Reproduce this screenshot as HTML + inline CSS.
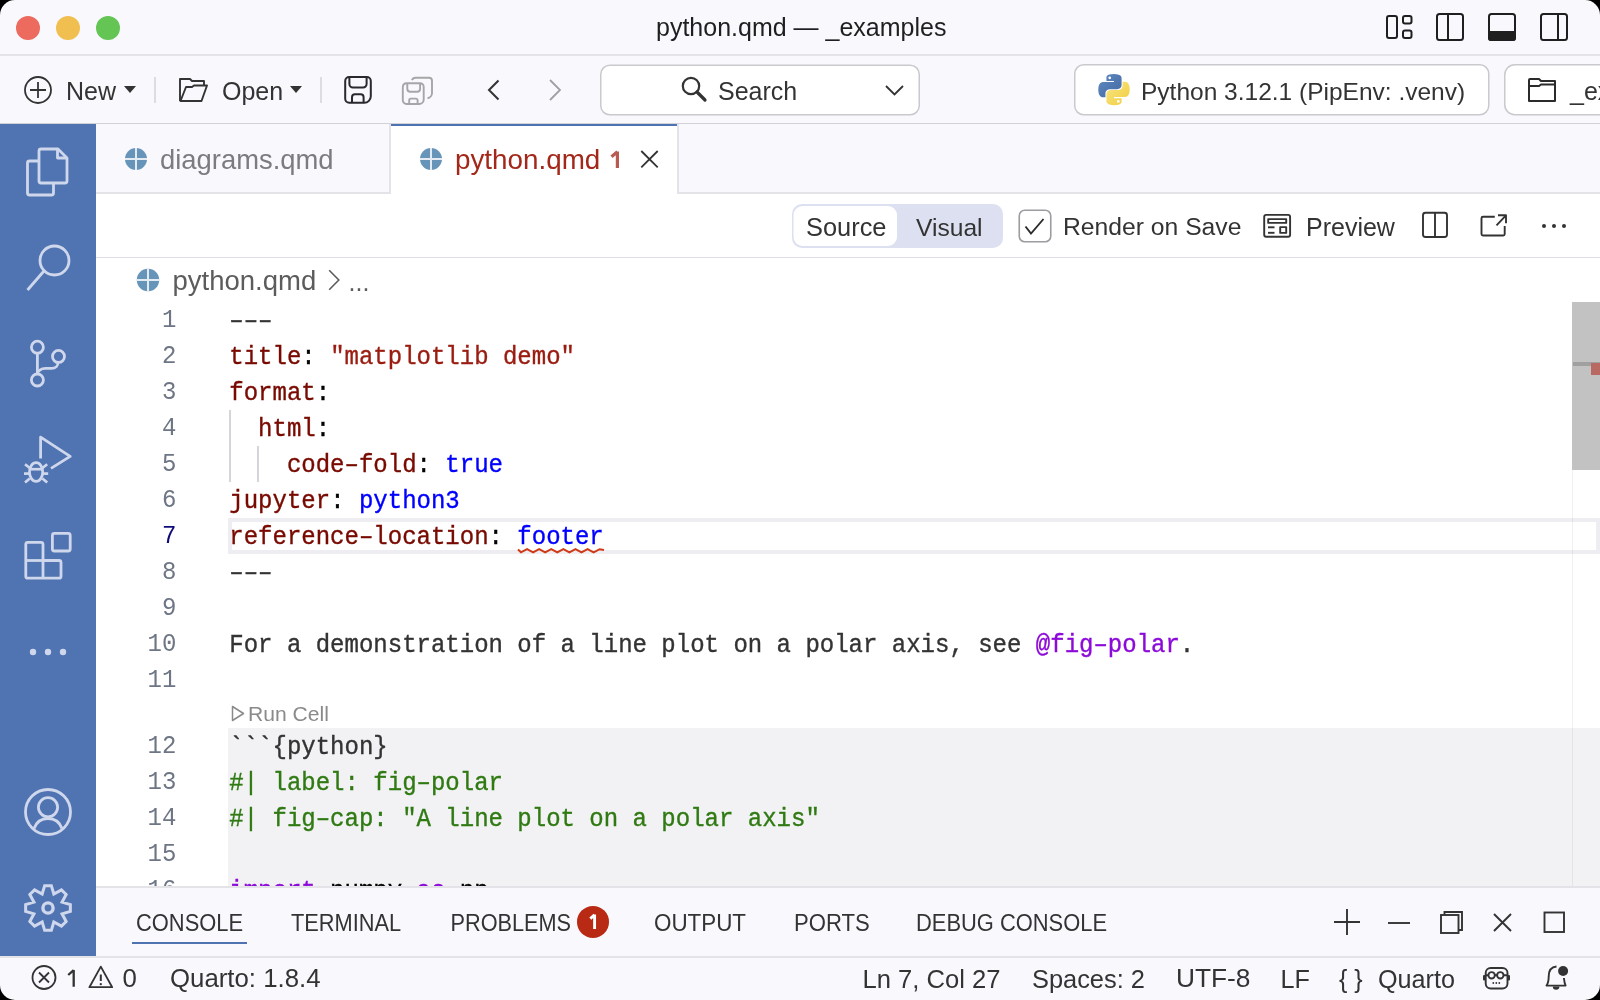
<!DOCTYPE html>
<html><head><meta charset="utf-8">
<style>
*{margin:0;padding:0;box-sizing:border-box}
html,body{width:1600px;height:1000px;overflow:hidden;background:#000}
body{font-family:"Liberation Sans",sans-serif;color:#333}
#win{will-change:transform;position:absolute;left:0;top:0;width:1600px;height:1000px;background:#f8f8fd;border-radius:15px;overflow:hidden}
.a{position:absolute;white-space:pre}
svg.s{position:absolute;overflow:visible;pointer-events:none}
</style></head><body>
<div id="win">
<svg class="s" width="1600" height="1000" style="left:0;top:0"><circle cx="28" cy="28" r="12" fill="#ec6a5e"/><circle cx="68" cy="28" r="12" fill="#f0bf4f"/><circle cx="108" cy="28" r="12" fill="#64c554"/></svg>
<div class="a" style="left:656px;top:11.14px;font-size:25px;line-height:32px;font-family:'Liberation Sans',sans-serif;color:#1f1f1f;">python.qmd — _examples</div>
<div class="a" style="left:0px;top:54px;width:1600px;height:2px;background:#e3e3e8;"></div>
<svg class="s" width="1600" height="1000" style="left:0;top:0"><g fill="none" stroke="#1f1f1f" stroke-width="2"><rect x="1387" y="16" width="10" height="22" rx="2"/><rect x="1403" y="16" width="8.5" height="7.5" rx="2"/><rect x="1403" y="30.5" width="8.5" height="7.5" rx="2"/><rect x="1437" y="14" width="26" height="26" rx="2.5"/><line x1="1448" y1="14" x2="1448" y2="40"/><rect x="1489" y="14" width="26" height="26" rx="2.5"/><rect x="1541" y="14" width="26" height="26" rx="2.5"/><line x1="1558" y1="14" x2="1558" y2="40"/></g><path d="M1488 31h28v7a3 3 0 0 1-3 3h-22a3 3 0 0 1-3-3z" fill="#1f1f1f"/></svg>
<div class="a" style="left:0px;top:123px;width:1600px;height:1px;background:#d2d2d8;"></div>
<svg class="s" width="1600" height="1000" style="left:0;top:0"><g fill="none" stroke="#333" stroke-width="1.8"><circle cx="38" cy="90" r="13"/><line x1="38" y1="82" x2="38" y2="98"/><line x1="30" y1="90" x2="46" y2="90"/></g><path d="M124 86h12l-6 7z" fill="#333"/><path d="M290 86h12l-6 7z" fill="#333"/></svg>
<div class="a" style="left:66px;top:74.94px;font-size:25px;line-height:32px;font-family:'Liberation Sans',sans-serif;color:#333;">New</div>
<div class="a" style="left:154px;top:77px;width:2px;height:26px;background:#dcdce2;"></div>
<div class="a" style="left:222px;top:74.94px;font-size:25px;line-height:32px;font-family:'Liberation Sans',sans-serif;color:#333;">Open</div>
<div class="a" style="left:320px;top:77px;width:2px;height:26px;background:#dcdce2;"></div>
<svg class="s" width="1600" height="1000" style="left:0;top:0"><g fill="none" stroke="#333" stroke-width="1.9" stroke-linejoin="round"><path d="M180 101V79h10l2 2h12v5"/><path d="M180.5 101l5.5-14h6l2-1.5h13l-5.5 15.5z"/></g></svg>
<svg class="s" width="1600" height="1000" style="left:0;top:0"><g fill="none" stroke="#2a2a2e" stroke-width="2" stroke-linejoin="round"><path d="M349.2 77h17.6a4 4 0 0 1 4 4v15.3a6.5 6.5 0 0 1-6.5 6.5h-15.1a4 4 0 0 1-4-4v-17.8a4 4 0 0 1 4-4z"/><path d="M349.4 77v7.1a3.5 3.5 0 0 0 3.5 3.5h10.2a3.5 3.5 0 0 0 3.5-3.5v-7.1"/><path d="M352 102.8v-5.6a3 3 0 0 1 3-3h5.6a3 3 0 0 1 3 3v5.6"/></g></svg>
<svg class="s" width="1600" height="1000" style="left:0;top:0"><g fill="none" stroke="#a6a6a9" stroke-width="1.9" stroke-linejoin="round"><path d="M412 80.2c0.6-1.6 2-2.5 3.5-2.5h13.5a3 3 0 0 1 3 3v12.5c0 2.3-2 4.6-4.5 5"/><path d="M406.5 83.2h13.5a3.7 3.7 0 0 1 3.7 3.7v12.6a4.5 4.5 0 0 1-4.5 4.5h-12.7a3.7 3.7 0 0 1-3.7-3.7v-13.4a3.7 3.7 0 0 1 3.7-3.7z"/><path d="M407.3 83.2v5.5a3 3 0 0 0 3 3h6.8a3 3 0 0 0 3-3v-5.5"/><path d="M409.2 104v-3.8a1.6 1.6 0 0 1 1.6-1.6h5.2a1.6 1.6 0 0 1 1.6 1.6v3.8"/></g></svg>
<svg class="s" width="1600" height="1000" style="left:0;top:0"><path d="M498.5 80.5l-9.5 9.5 9.5 9.5" fill="none" stroke="#333" stroke-width="2"/><path d="M550 80l10 10-10 10" fill="none" stroke="#a0a0a4" stroke-width="1.8"/></svg>
<svg class="s" width="1600" height="1000" style="left:0;top:0"><rect x="600.75" y="65.25" width="318.5" height="49.5" rx="9" fill="#fff" stroke="#c9c9ce" stroke-width="1.5"/><circle cx="691" cy="86" r="8.2" fill="none" stroke="#333" stroke-width="2.2"/><line x1="697" y1="92" x2="705" y2="100" stroke="#333" stroke-width="3.2" stroke-linecap="round"/><path d="M886 86l8.5 8.5 8.5-8.5" fill="none" stroke="#333" stroke-width="1.8"/></svg>
<div class="a" style="left:718px;top:74.94px;font-size:25px;line-height:32px;font-family:'Liberation Sans',sans-serif;color:#333;">Search</div>
<svg class="s" width="1600" height="1000" style="left:0;top:0"><rect x="1074.75" y="64.75" width="414" height="50" rx="9" fill="#fff" stroke="#c9c9ce" stroke-width="1.5"/><rect x="1504.75" y="64.75" width="150" height="50" rx="10" fill="#fff" stroke="#c9c9ce" stroke-width="1.5"/></svg>
<svg class="s" width="1600" height="1000" style="left:0;top:0"><defs><linearGradient id="pyb" x1="0" y1="0" x2="1" y2="1"><stop offset="0" stop-color="#5f8bc4"/><stop offset="1" stop-color="#44689f"/></linearGradient><linearGradient id="pyy" x1="0" y1="0" x2="1" y2="1"><stop offset="0" stop-color="#f8e784"/><stop offset="1" stop-color="#f1cc3e"/></linearGradient></defs><g transform="translate(1098.3,74) scale(0.284)"><path fill="url(#pyb)" d="M54.9 0C26.9 0 28.6 12.1 28.6 12.1v12.6h26.7v3.8H18S0 26.5 0 54.9s15.7 27.4 15.7 27.4h9.4V69.1s-.5-15.7 15.4-15.7h26.6s14.9.2 14.9-14.4V14.8S84.3 0 54.9 0zM40.2 8.5a4.8 4.8 0 1 1 0 9.6 4.8 4.8 0 0 1 0-9.6z"/><path fill="url(#pyy)" d="M55.7 109.8c28 0 26.3-12.1 26.3-12.1V85.1H55.3v-3.8h37.4s17.9 2 17.9-26.3-15.7-27.4-15.7-27.4h-9.4v13.2s.5 15.7-15.4 15.7H43.5s-14.9-.2-14.9 14.4v24.2s-2.3 14.8 27.1 14.8zm14.7-8.5a4.8 4.8 0 1 1 0-9.6 4.8 4.8 0 0 1 0 9.6z"/></g></svg>
<div class="a" style="left:1141px;top:75.61px;font-size:24.5px;line-height:31px;font-family:'Liberation Sans',sans-serif;color:#333;">Python 3.12.1 (PipEnv: .venv)</div>
<svg class="s" width="1600" height="1000" style="left:0;top:0"><g fill="none" stroke="#2b2b2b" stroke-width="2" stroke-linejoin="round"><path d="M1529 101V80a1 1 0 0 1 1-1h9l2 2h14v20z"/><path d="M1529 86h10l2-1.5h14"/></g></svg>
<div class="a" style="left:1570px;top:74.94px;font-size:25px;line-height:32px;font-family:'Liberation Sans',sans-serif;color:#333;">_examples</div>
<div class="a" style="left:0px;top:124px;width:96px;height:832px;background:#5073b1;"></div>
<svg class="s" width="1600" height="1000" style="left:0;top:0"><g fill="none" stroke="#cfd7ec" stroke-width="2.8" stroke-linejoin="round"><path d="M38.5 161h-9a2 2 0 0 0-2 2v30a2 2 0 0 0 2 2h22a2 2 0 0 0 2-2v-10"/><path d="M41 149h17l9 9v23a2 2 0 0 1-2 2h-24a2 2 0 0 1-2-2v-30a2 2 0 0 1 2-2z"/><path d="M57.5 149v9h9"/><circle cx="54.5" cy="260.5" r="14.5"/><line x1="44" y1="271" x2="27.5" y2="290"/><circle cx="37.4" cy="347.2" r="6"/><circle cx="58.5" cy="356.4" r="6"/><circle cx="37.4" cy="380" r="6"/><line x1="37.4" y1="353.2" x2="37.4" y2="374"/><path d="M58 362.4c0 3.5-2.5 6-6.5 6h-6c-4.5 0-8 2.5-8 5.6"/><path d="M40.6 458.5V437.2l29.6 19.2-19.2 12"/><path d="M27.8 542.4H41a2 2 0 0 1 2 2V560.5H59a2 2 0 0 1 2 2V576.2a2 2 0 0 1-2 2H27.8a2 2 0 0 1-2-2V544.4a2 2 0 0 1 2-2z"/><line x1="25.8" y1="560.5" x2="43" y2="560.5"/><line x1="43" y1="560.5" x2="43" y2="578.2"/><rect x="52.4" y="533.4" width="17.8" height="17.6" rx="2"/><circle cx="48" cy="812" r="22.5"/><circle cx="48" cy="807.3" r="9.6"/><path d="M34 828.5c2.5-6.5 7.5-10 14-10s11.5 3.5 14 10"/></g></svg>
<svg class="s" width="1600" height="1000" style="left:0;top:0"><g fill="none" stroke="#cfd7ec" stroke-width="2.7"><ellipse cx="36.1" cy="472" rx="6.6" ry="9.4"/><line x1="29" y1="469.2" x2="43.2" y2="469.2"/><line x1="25" y1="464.2" x2="29.8" y2="468"/><line x1="47.2" y1="464.2" x2="42.4" y2="468"/><line x1="24" y1="473.6" x2="29.5" y2="473.6"/><line x1="48.2" y1="473.6" x2="42.7" y2="473.6"/><line x1="25" y1="482.6" x2="29.8" y2="478.4"/><line x1="47.2" y1="482.6" x2="42.4" y2="478.4"/></g></svg>
<svg class="s" width="1600" height="1000" style="left:0;top:0"><g fill="#cfd7ec"><circle cx="33" cy="652" r="3.2"/><circle cx="48" cy="652" r="3.2"/><circle cx="63" cy="652" r="3.2"/></g></svg>
<svg class="s" width="1600" height="1000" style="left:0;top:0"><path d="M44.66,885.65 L51.34,885.65 L53.82,893.96 L61.44,889.83 L66.17,894.56 L62.04,902.18 L70.35,904.66 L70.35,911.34 L62.04,913.82 L66.17,921.44 L61.44,926.17 L53.82,922.04 L51.34,930.35 L44.66,930.35 L42.18,922.04 L34.56,926.17 L29.83,921.44 L33.96,913.82 L25.65,911.34 L25.65,904.66 L33.96,902.18 L29.83,894.56 L34.56,889.83 L42.18,893.96z" fill="none" stroke="#cfd7ec" stroke-width="3" stroke-linejoin="miter" stroke-miterlimit="10"/><circle cx="48" cy="908" r="5.1" fill="none" stroke="#cfd7ec" stroke-width="3.4"/></svg>
<div class="a" style="left:96px;top:192px;width:1504px;height:2px;background:#e3e3e8;"></div>
<div class="a" style="left:389px;top:124px;width:290px;height:70px;background:#fff;border-left:2px solid #e3e3e8;border-right:2px solid #e3e3e8;"></div>
<div class="a" style="left:391px;top:124px;width:286px;height:2px;background:#4f72b0;"></div>
<svg class="s" width="1600" height="1000" style="left:0;top:0"><circle cx="136" cy="159" r="11" fill="#6795b9"/><line x1="136" y1="148" x2="136" y2="170" stroke="#e4ebf2" stroke-width="2"/><line x1="125" y1="159" x2="147" y2="159" stroke="#e4ebf2" stroke-width="2"/><circle cx="431" cy="159" r="11" fill="#6795b9"/><line x1="431" y1="148" x2="431" y2="170" stroke="#e4ebf2" stroke-width="2"/><line x1="420" y1="159" x2="442" y2="159" stroke="#e4ebf2" stroke-width="2"/></svg>
<div class="a" style="left:160px;top:142.01px;font-size:27.4px;line-height:35px;font-family:'Liberation Sans',sans-serif;color:#7c7c80;">diagrams.qmd</div>
<div class="a" style="left:455px;top:142.47px;font-size:27.8px;line-height:35px;font-family:'Liberation Sans',sans-serif;color:#a3281a;">python.qmd</div>
<svg class="s" width="1600" height="1000" style="left:0;top:0"><path d="M617.4 151.5V168M611.5 156.8l5.9-5" fill="none" stroke="#b85a4f" stroke-width="3.2"/></svg>
<svg class="s" width="1600" height="1000" style="left:0;top:0"><path d="M641.3 151l16.4 16.4M657.7 151l-16.4 16.4" stroke="#333" stroke-width="1.8"/></svg>
<div class="a" style="left:96px;top:194px;width:1504px;height:692px;background:#fff;"></div>
<div class="a" style="left:96px;top:257px;width:1504px;height:1px;background:#dddce8;"></div>
<svg class="s" width="1600" height="1000" style="left:0;top:0"><rect x="792" y="204" width="211" height="44" rx="10" fill="#dde0f0"/><rect x="793.5" y="206" width="103.5" height="40" rx="9" fill="#fff"/><rect x="1019.25" y="210.25" width="31.5" height="31.5" rx="5.5" fill="#fff" stroke="#9c9ca2" stroke-width="1.6"/><path d="M1025.5 226.5l5.5 7 12.5-14.5" fill="none" stroke="#2b2b2b" stroke-width="1.9"/></svg>
<div class="a" style="left:806px;top:210.80px;font-size:25.4px;line-height:32px;font-family:'Liberation Sans',sans-serif;color:#333;">Source</div>
<div class="a" style="left:916px;top:211.58px;font-size:24.6px;line-height:31px;font-family:'Liberation Sans',sans-serif;color:#333;">Visual</div>
<div class="a" style="left:1063px;top:210.54px;font-size:24.7px;line-height:31px;font-family:'Liberation Sans',sans-serif;color:#333;">Render on Save</div>
<div class="a" style="left:1306px;top:210.94px;font-size:25px;line-height:32px;font-family:'Liberation Sans',sans-serif;color:#333;">Preview</div>
<svg class="s" width="1600" height="1000" style="left:0;top:0"><g fill="none" stroke="#333" stroke-width="1.9" stroke-linejoin="round"><rect x="1264.2" y="214.9" width="25.9" height="21.8" rx="2"/><rect x="1268.2" y="219.1" width="18" height="3.8"/><line x1="1268" y1="227.3" x2="1274.5" y2="227.3"/><line x1="1268" y1="232.8" x2="1274.5" y2="232.8"/><rect x="1280.2" y="227.1" width="6" height="5.8" /><rect x="1423" y="212.8" width="24" height="24.2" rx="2.5"/><line x1="1435" y1="212.8" x2="1435" y2="237"/><path d="M1494.8 216.8h-11.8a1.5 1.5 0 0 0-1.5 1.5v15.7a1.5 1.5 0 0 0 1.5 1.5h20.2a1.5 1.5 0 0 0 1.5-1.5v-8"/><path d="M1498 215.3h8v8M1506 215.3l-9.5 10"/></g><g fill="#333"><circle cx="1544" cy="226" r="2"/><circle cx="1554" cy="226" r="2"/><circle cx="1564" cy="226" r="2"/></g></svg>
<svg class="s" width="1600" height="1000" style="left:0;top:0"><circle cx="148" cy="280" r="11.2" fill="#6795b9"/><line x1="148" y1="268.8" x2="148" y2="291.2" stroke="#e4ebf2" stroke-width="2"/><line x1="136.8" y1="280" x2="159.2" y2="280" stroke="#e4ebf2" stroke-width="2"/></svg>
<div class="a" style="left:172.5px;top:263.37px;font-size:27.5px;line-height:35px;font-family:'Liberation Sans',sans-serif;color:#5c5c5c;">python.qmd</div>
<svg class="s" width="1600" height="1000" style="left:0;top:0"><path d="M329.2 270.3l9.6 9.7-9.6 9.7" fill="none" stroke="#5c5c5c" stroke-width="1.6"/></svg>
<div class="a" style="left:348.5px;top:265.74px;font-size:25px;line-height:32px;font-family:'Liberation Sans',sans-serif;color:#5c5c5c;">...</div>
<div class="a" style="left:228px;top:518px;width:1372px;height:36px;background:transparent;border:4px solid #ededf2;"></div>
<div class="a" style="left:228px;top:728px;width:1372px;height:158px;background:#f2f2f5;"></div>
<div class="a" style="left:229px;top:410px;width:2px;height:72px;background:#d4d4da;"></div>
<div class="a" style="left:257px;top:446px;width:2px;height:36px;background:#d4d4da;"></div>
<div class="a" style="left:161.9px;top:306.36px;font-size:24px;line-height:30px;font-family:'Liberation Mono',monospace;color:#6e7685;transform:scaleY(1.1);transform-origin:0 21.39px;">1</div>
<div class="a" style="left:161.9px;top:342.36px;font-size:24px;line-height:30px;font-family:'Liberation Mono',monospace;color:#6e7685;transform:scaleY(1.1);transform-origin:0 21.39px;">2</div>
<div class="a" style="left:161.9px;top:378.36px;font-size:24px;line-height:30px;font-family:'Liberation Mono',monospace;color:#6e7685;transform:scaleY(1.1);transform-origin:0 21.39px;">3</div>
<div class="a" style="left:161.9px;top:414.36px;font-size:24px;line-height:30px;font-family:'Liberation Mono',monospace;color:#6e7685;transform:scaleY(1.1);transform-origin:0 21.39px;">4</div>
<div class="a" style="left:161.9px;top:450.36px;font-size:24px;line-height:30px;font-family:'Liberation Mono',monospace;color:#6e7685;transform:scaleY(1.1);transform-origin:0 21.39px;">5</div>
<div class="a" style="left:161.9px;top:486.36px;font-size:24px;line-height:30px;font-family:'Liberation Mono',monospace;color:#6e7685;transform:scaleY(1.1);transform-origin:0 21.39px;">6</div>
<div class="a" style="left:161.9px;top:522.36px;font-size:24px;line-height:30px;font-family:'Liberation Mono',monospace;color:#0e0a78;transform:scaleY(1.1);transform-origin:0 21.39px;">7</div>
<div class="a" style="left:161.9px;top:558.36px;font-size:24px;line-height:30px;font-family:'Liberation Mono',monospace;color:#6e7685;transform:scaleY(1.1);transform-origin:0 21.39px;">8</div>
<div class="a" style="left:161.9px;top:594.36px;font-size:24px;line-height:30px;font-family:'Liberation Mono',monospace;color:#6e7685;transform:scaleY(1.1);transform-origin:0 21.39px;">9</div>
<div class="a" style="left:147.5px;top:630.36px;font-size:24px;line-height:30px;font-family:'Liberation Mono',monospace;color:#6e7685;transform:scaleY(1.1);transform-origin:0 21.39px;">10</div>
<div class="a" style="left:147.5px;top:666.36px;font-size:24px;line-height:30px;font-family:'Liberation Mono',monospace;color:#6e7685;transform:scaleY(1.1);transform-origin:0 21.39px;">11</div>
<div class="a" style="left:147.5px;top:732.36px;font-size:24px;line-height:30px;font-family:'Liberation Mono',monospace;color:#6e7685;transform:scaleY(1.1);transform-origin:0 21.39px;">12</div>
<div class="a" style="left:147.5px;top:768.36px;font-size:24px;line-height:30px;font-family:'Liberation Mono',monospace;color:#6e7685;transform:scaleY(1.1);transform-origin:0 21.39px;">13</div>
<div class="a" style="left:147.5px;top:804.36px;font-size:24px;line-height:30px;font-family:'Liberation Mono',monospace;color:#6e7685;transform:scaleY(1.1);transform-origin:0 21.39px;">14</div>
<div class="a" style="left:147.5px;top:840.36px;font-size:24px;line-height:30px;font-family:'Liberation Mono',monospace;color:#6e7685;transform:scaleY(1.1);transform-origin:0 21.39px;">15</div>
<div class="a" style="left:147.5px;top:876.36px;font-size:24px;line-height:30px;font-family:'Liberation Mono',monospace;color:#6e7685;transform:scaleY(1.1);transform-origin:0 21.39px;">16</div>
<div class="a" style="left:229.3px;top:307.16px;font-size:24px;line-height:30px;font-family:'Liberation Mono',monospace;color:#000;-webkit-text-stroke:0.35px currentColor;transform:scaleY(1.08);transform-origin:0 21.39px;"><span style="color:#333">–––</span></div>
<div class="a" style="left:229.3px;top:343.16px;font-size:24px;line-height:30px;font-family:'Liberation Mono',monospace;color:#000;-webkit-text-stroke:0.35px currentColor;transform:scaleY(1.08);transform-origin:0 21.39px;"><span style="color:#780a00">title</span><span style="color:#000">: </span><span style="color:#9a1c10">&quot;matplotlib demo&quot;</span></div>
<div class="a" style="left:229.3px;top:379.16px;font-size:24px;line-height:30px;font-family:'Liberation Mono',monospace;color:#000;-webkit-text-stroke:0.35px currentColor;transform:scaleY(1.08);transform-origin:0 21.39px;"><span style="color:#780a00">format</span><span style="color:#000">:</span></div>
<div class="a" style="left:229.3px;top:415.16px;font-size:24px;line-height:30px;font-family:'Liberation Mono',monospace;color:#000;-webkit-text-stroke:0.35px currentColor;transform:scaleY(1.08);transform-origin:0 21.39px;"><span style="color:#780a00">  html</span><span style="color:#000">:</span></div>
<div class="a" style="left:229.3px;top:451.16px;font-size:24px;line-height:30px;font-family:'Liberation Mono',monospace;color:#000;-webkit-text-stroke:0.35px currentColor;transform:scaleY(1.08);transform-origin:0 21.39px;"><span style="color:#780a00">    code–fold</span><span style="color:#000">: </span><span style="color:#0000ff">true</span></div>
<div class="a" style="left:229.3px;top:487.16px;font-size:24px;line-height:30px;font-family:'Liberation Mono',monospace;color:#000;-webkit-text-stroke:0.35px currentColor;transform:scaleY(1.08);transform-origin:0 21.39px;"><span style="color:#780a00">jupyter</span><span style="color:#000">: </span><span style="color:#0000ff">python3</span></div>
<div class="a" style="left:229.3px;top:523.16px;font-size:24px;line-height:30px;font-family:'Liberation Mono',monospace;color:#000;-webkit-text-stroke:0.35px currentColor;transform:scaleY(1.08);transform-origin:0 21.39px;"><span style="color:#780a00">reference–location</span><span style="color:#000">: </span><span style="color:#0000ff">footer</span></div>
<div class="a" style="left:229.3px;top:559.16px;font-size:24px;line-height:30px;font-family:'Liberation Mono',monospace;color:#000;-webkit-text-stroke:0.35px currentColor;transform:scaleY(1.08);transform-origin:0 21.39px;"><span style="color:#333">–––</span></div>
<div class="a" style="left:229.3px;top:631.16px;font-size:24px;line-height:30px;font-family:'Liberation Mono',monospace;color:#000;-webkit-text-stroke:0.35px currentColor;transform:scaleY(1.08);transform-origin:0 21.39px;"><span style="color:#333">For a demonstration of a line plot on a polar axis, see </span><span style="color:#8c0ad8">@fig–polar</span><span style="color:#333">.</span></div>
<div class="a" style="left:229.3px;top:733.16px;font-size:24px;line-height:30px;font-family:'Liberation Mono',monospace;color:#000;-webkit-text-stroke:0.35px currentColor;transform:scaleY(1.08);transform-origin:0 21.39px;"><span style="color:#333">```{python}</span></div>
<div class="a" style="left:229.3px;top:769.16px;font-size:24px;line-height:30px;font-family:'Liberation Mono',monospace;color:#000;-webkit-text-stroke:0.35px currentColor;transform:scaleY(1.08);transform-origin:0 21.39px;"><span style="color:#2f7a12">#| label: fig–polar</span></div>
<div class="a" style="left:229.3px;top:805.16px;font-size:24px;line-height:30px;font-family:'Liberation Mono',monospace;color:#000;-webkit-text-stroke:0.35px currentColor;transform:scaleY(1.08);transform-origin:0 21.39px;"><span style="color:#2f7a12">#| fig–cap: &quot;A line plot on a polar axis&quot;</span></div>
<div class="a" style="left:229.3px;top:877.16px;font-size:24px;line-height:30px;font-family:'Liberation Mono',monospace;color:#000;-webkit-text-stroke:0.35px currentColor;transform:scaleY(1.08);transform-origin:0 21.39px;"><span style="color:#8c0ad8">import</span><span style="color:#000"> numpy </span><span style="color:#8c0ad8">as</span><span style="color:#000"> np</span></div>
<svg class="s" width="1600" height="1000" style="left:0;top:0"><path d="M518.00 549.5 L521.00 552.3 L527.05 549.2 L533.10 552.3 L539.15 549.2 L545.20 552.3 L551.25 549.2 L557.30 552.3 L563.35 549.2 L569.40 552.3 L575.45 549.2 L581.50 552.3 L587.55 549.2 L593.60 552.3 L599.65 549.2 L604.00 550" fill="none" stroke="#cf3a17" stroke-width="2" stroke-linejoin="miter"/></svg>
<svg class="s" width="1600" height="1000" style="left:0;top:0"><path d="M232.5 706.5v14l11-7z" fill="none" stroke="#8a8a8a" stroke-width="1.5" stroke-linejoin="round"/></svg>
<div class="a" style="left:248px;top:700.29px;font-size:21.1px;line-height:27px;font-family:'Liberation Sans',sans-serif;color:#8a8a8a;">Run Cell</div>
<div class="a" style="left:1572px;top:470px;width:1px;height:416px;background:rgba(0,0,0,0.055);"></div>
<div class="a" style="left:1572px;top:302px;width:28px;height:168px;background:#c2c2c2;"></div>
<div class="a" style="left:1573px;top:362px;width:27px;height:4px;background:#a0a0a0;"></div>
<div class="a" style="left:1591px;top:363px;width:9px;height:12px;background:#b86a62;"></div>
<div class="a" style="left:96px;top:886px;width:1504px;height:70px;background:#f8f8fd;"></div>
<div class="a" style="left:96px;top:886px;width:1504px;height:2px;background:#e3e3e8;"></div>
<div class="a" style="left:136px;top:910.01px;font-size:21.9px;line-height:28px;font-family:'Liberation Sans',sans-serif;color:#333;transform:scaleY(1.1);transform-origin:0 21.59px;">CONSOLE</div>
<div class="a" style="left:132px;top:942px;width:114.5px;height:2px;background:#4f72b0;"></div>
<div class="a" style="left:291px;top:910.05px;font-size:21.8px;line-height:28px;font-family:'Liberation Sans',sans-serif;color:#333;transform:scaleY(1.1);transform-origin:0 21.55px;">TERMINAL</div>
<div class="a" style="left:450.5px;top:910.08px;font-size:21.7px;line-height:28px;font-family:'Liberation Sans',sans-serif;color:#333;transform:scaleY(1.1);transform-origin:0 21.52px;">PROBLEMS</div>
<svg class="s" width="1600" height="1000" style="left:0;top:0"><circle cx="593" cy="921.9" r="16" fill="#b92a14"/></svg>
<svg class="s" width="1600" height="1000" style="left:0;top:0"><path d="M594.6 914.6V929M590.3 918.6l4.3-3.9" fill="none" stroke="#fff" stroke-width="2.9"/></svg>
<div class="a" style="left:654px;top:909.84px;font-size:22.4px;line-height:28px;font-family:'Liberation Sans',sans-serif;color:#333;transform:scaleY(1.1);transform-origin:0 21.76px;">OUTPUT</div>
<div class="a" style="left:794px;top:909.94px;font-size:22.1px;line-height:28px;font-family:'Liberation Sans',sans-serif;color:#333;transform:scaleY(1.1);transform-origin:0 21.66px;">PORTS</div>
<div class="a" style="left:916px;top:910.01px;font-size:21.9px;line-height:28px;font-family:'Liberation Sans',sans-serif;color:#333;transform:scaleY(1.1);transform-origin:0 21.59px;">DEBUG CONSOLE</div>
<svg class="s" width="1600" height="1000" style="left:0;top:0"><g fill="none" stroke="#333" stroke-width="1.9"><path d="M1334 922h26M1347 909v26"/><path d="M1388 923h22"/><rect x="1441" y="915" width="17.5" height="18"/><path d="M1444.5 915v-3h17.5v18h-3.5"/><path d="M1494 914l17 17M1511 914l-17 17"/><rect x="1544.5" y="912.5" width="19.5" height="19.5"/></g></svg>
<div class="a" style="left:0px;top:956px;width:1600px;height:2px;background:#e3e3e8;"></div>
<svg class="s" width="1600" height="1000" style="left:0;top:0"><g fill="none" stroke="#333" stroke-width="1.8"><circle cx="44" cy="977.5" r="11.5"/><path d="M39 972.5l10 10M49 972.5l-10 10"/><path d="M100.8 966.6l11.4 20.6h-22.8z" stroke-linejoin="round"/></g><g fill="#333"><rect x="99.8" y="974.5" width="2" height="6.5"/><circle cx="100.8" cy="984.2" r="1.15"/></g></svg>
<svg class="s" width="1600" height="1000" style="left:0;top:0"><path d="M73.7 970V986.7M68.2 975l5.5-4.9" fill="none" stroke="#333" stroke-width="2.3"/></svg>
<div class="a" style="left:122.5px;top:962.16px;font-size:25.8px;line-height:33px;font-family:'Liberation Sans',sans-serif;color:#333;">0</div>
<div class="a" style="left:170px;top:962.16px;font-size:25.8px;line-height:33px;font-family:'Liberation Sans',sans-serif;color:#333;">Quarto: 1.8.4</div>
<div class="a" style="left:862.5px;top:962.73px;font-size:25.6px;line-height:32px;font-family:'Liberation Sans',sans-serif;color:#333;">Ln 7, Col 27</div>
<div class="a" style="left:1032px;top:962.80px;font-size:25.4px;line-height:32px;font-family:'Liberation Sans',sans-serif;color:#333;">Spaces: 2</div>
<div class="a" style="left:1176px;top:961.99px;font-size:26.3px;line-height:33px;font-family:'Liberation Sans',sans-serif;color:#333;">UTF-8</div>
<div class="a" style="left:1280.5px;top:962.87px;font-size:25.2px;line-height:32px;font-family:'Liberation Sans',sans-serif;color:#333;">LF</div>
<div class="a" style="left:1339px;top:962.94px;font-size:25px;line-height:32px;font-family:'Liberation Sans',sans-serif;color:#333;">{ }</div>
<div class="a" style="left:1378px;top:962.87px;font-size:25.2px;line-height:32px;font-family:'Liberation Sans',sans-serif;color:#333;">Quarto</div>
<svg class="s" width="1600" height="1000" style="left:0;top:0"><g fill="none" stroke="#333" stroke-width="1.9"><path d="M1485.7 973a5 5 0 0 1 5-5h11.8a5 5 0 0 1 5 5v10.5a5 5 0 0 1-5 5h-11.8a5 5 0 0 1-5-5z"/><circle cx="1491.6" cy="975.3" r="3.2"/><circle cx="1500.3" cy="975.3" r="3.2"/><path d="M1494.8 975.3h2.3M1485.7 975.3h2.7M1503.5 975.3h3.5"/></g><g fill="#333"><rect x="1483" y="975" width="2.5" height="5.6" rx="1"/><rect x="1507.5" y="975" width="2.5" height="5.6" rx="1"/><circle cx="1493.3" cy="983" r="0.9"/><circle cx="1496.3" cy="983" r="0.9"/><circle cx="1499.3" cy="983" r="0.9"/></g><path d="M1556.5 966.5C1551 967 1548.7 971 1548.7 976.5C1548.7 981 1548 983.5 1546.5 985.6H1565.6C1564.6 983.5 1564.2 981 1563.9 978" fill="none" stroke="#333" stroke-width="1.9" stroke-linejoin="round"/><path d="M1552.8 986.5a3.3 3.3 0 0 0 6.6 0z" fill="#333"/><circle cx="1563.1" cy="971" r="5" fill="#333"/></svg></div>
</body></html>
